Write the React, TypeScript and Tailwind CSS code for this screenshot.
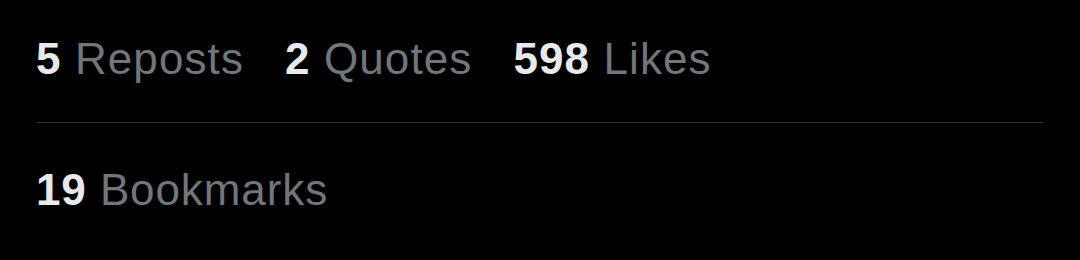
import React from 'react';

const stats = [
  { count: '5', label: 'Reposts' },
  { count: '2', label: 'Quotes' },
  { count: '598', label: 'Likes' },
];

function Stat({ count, label }: { count: string; label: string }) {
  return (
    <span className="whitespace-nowrap">
      <span className="font-bold text-[#e7e9ea]">{count}</span>
      <span className="text-[#71767b]"> {label}</span>
    </span>
  );
}

export default function App() {
  return (
    <div
      className="h-[260px] w-[1080px] bg-black px-[36px] text-[44px] leading-[44px] tracking-[1.1px]"
      style={{ fontFamily: '"Liberation Sans", Arial, sans-serif' }}
    >
      <div className="flex h-[123px] items-start gap-[41px] border-b border-[#2f3336] pt-[37px]">
        {stats.map((s) => (
          <Stat key={s.label} count={s.count} label={s.label} />
        ))}
      </div>
      <div className="flex pt-[45px] tracking-[0.9px]">
        <Stat count="19" label="Bookmarks" />
      </div>
    </div>
  );
}
